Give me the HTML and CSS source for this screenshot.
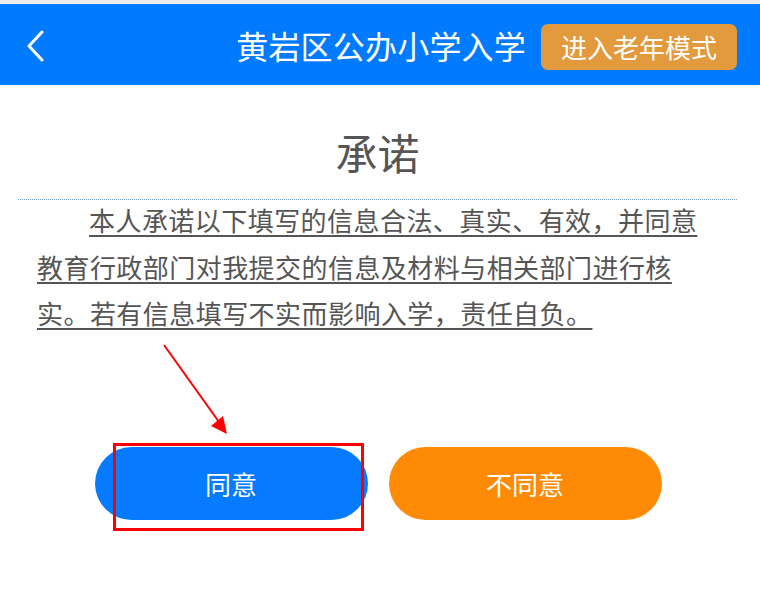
FILE: index.html
```html
<!DOCTYPE html>
<html lang="zh-CN">

<head>
  <meta charset="UTF-8">
  <meta name="viewport" content="width=device-width, initial-scale=1.0">
  <title>承诺</title>
  <link rel="stylesheet" href="styles.css">
</head>

<body>
  <div class="status"></div>
  <div class="header">
    <div class="back">
      <svg width="20" height="32" viewBox="0 0 20 32">
        <polyline points="16,2 3,16 16,30" fill="none" stroke="#fff" stroke-width="3" stroke-linecap="round" stroke-linejoin="round" />
      </svg>
    </div>
    <div class="title">黄岩区公办小学入学</div>
    <div class="elder">进入老年模式</div>
  </div>

  <div class="content">
    <h1 class="heading">承诺</h1>
    <div class="line"></div>
    <p class="promise">本人承诺以下填写的信息合法、真实、有效，并同意教育行政部门对我提交的信息及材料与相关部门进行核实。若有信息填写不实而影响入学，责任自负。</p>

    <div class="buttons">
      <div class="btn btn-agree">同意</div>
      <div class="btn btn-disagree">不同意</div>
    </div>
  </div>

  <!-- annotation drawn over the page -->
  <svg class="arrow" width="80" height="100" viewBox="0 0 80 100">
    <line x1="3" y1="3" x2="58" y2="80" stroke="#f00" stroke-width="2" />
    <polygon points="66,92 50,84 62,74" fill="#f00" />
  </svg>
  <div class="mark"></div>
</body>

</html>
```

FILE: styles.css
```css
* {
  margin: 0;
  padding: 0;
  box-sizing: border-box;
}

body {
  width: 760px;
  height: 606px;
  background: #fff;
  font-family: "Noto Sans CJK SC", "Noto Sans", sans-serif;
  position: relative;
  overflow: hidden;
}

.status {
  height: 4px;
  background: #ececec;
}

.header {
  height: 81px;
  background: #007aff;
  display: flex;
  align-items: center;
  padding: 0 23px 0 26px;
}

.back {
  display: flex;
  align-items: center;
  margin-top: 2px;
}

.title {
  margin-left: auto;
  color: #fff;
  font-size: 32px;
  line-height: 1;
  letter-spacing: 0.2px;
}

.elder {
  margin-left: 15px;
  width: 196px;
  height: 46px;
  background: #e29a3c;
  border-radius: 7px;
  color: #fff;
  font-size: 26px;
  display: flex;
  align-items: center;
  justify-content: center;
  margin-top: 4px;
}

.heading {
  text-align: center;
  font-size: 42px;
  font-weight: 400;
  color: #555;
  line-height: 1;
  margin-top: 46px;
  padding-right: 5px;
}

.line {
  margin: 26px 23px 0 18px;
  border-top: 1px dotted #6fa3c6;
}

.promise {
  margin: -3px 48px 0 37px;
  font-size: 26px;
  line-height: 46.5px;
  letter-spacing: 0.45px;
  text-indent: 2em;
  color: #555;
  text-decoration: underline;
  text-decoration-thickness: 2px;
  text-underline-offset: 4px;
}

.buttons {
  display: flex;
  justify-content: center;
  gap: 21px;
  margin-top: 110px;
  padding-right: 4px;
}

.btn {
  width: 273px;
  height: 73px;
  border-radius: 37px;
  color: #fff;
  font-size: 26px;
  display: flex;
  align-items: center;
  justify-content: center;
}

.btn-agree {
  background: #077bff;
}

.btn-disagree {
  background: #ff8a06;
}

.arrow {
  position: absolute;
  left: 161px;
  top: 342px;
}

.mark {
  position: absolute;
  left: 113px;
  top: 443px;
  width: 251px;
  height: 88px;
  border: 3px solid #f00;
}
```
